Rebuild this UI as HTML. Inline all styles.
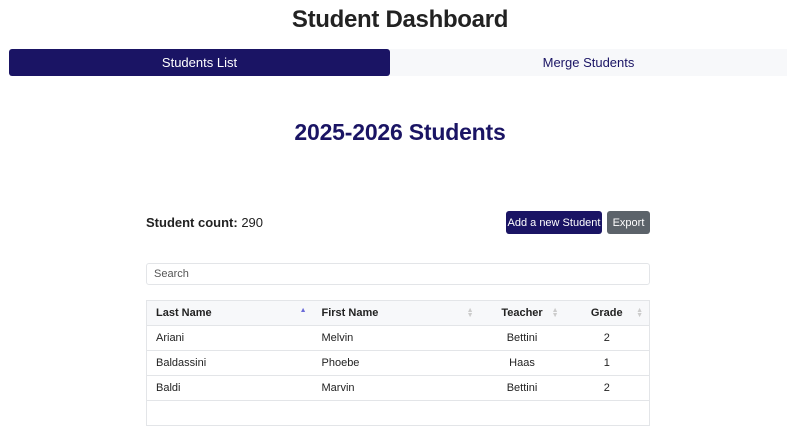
<!DOCTYPE html>
<html><head><style>
*{box-sizing:border-box;margin:0;padding:0}
body{width:800px;height:400px;overflow:hidden;background:#fff;font-family:"Liberation Sans",sans-serif;color:#222}
h1{position:absolute;top:4px;left:0;width:800px;text-align:center;font-size:24px;font-weight:bold;color:#222;line-height:32px;letter-spacing:-0.3px}
.tab{position:absolute;top:49px;height:27px;line-height:27px;text-align:center;font-size:13px}
.t1{left:9px;width:381px;background:#1a1464;color:#fff;border-radius:3px}
.t2{left:390px;width:397px;background:#f7f8fa;color:#1a1464}
h2{position:absolute;top:119px;left:0;width:800px;text-align:center;font-size:23px;font-weight:bold;color:#1a1464;letter-spacing:-0.2px}
.cnt{position:absolute;left:146px;top:215px;font-size:13px}
.btn{position:absolute;top:211px;height:23px;font-size:11px;color:#fff;border-radius:3px;white-space:nowrap;display:flex;align-items:center;justify-content:center}
.add{left:506px;width:96px;background:#1a1464}
.exp{left:607px;width:43px;background:#5c636a}
.search{position:absolute;left:146px;top:263px;width:504px;height:22px;border:1px solid #e3e5e8;border-radius:3px;font-size:11px;color:#555;padding-left:7px;line-height:20px}
table{position:absolute;left:146px;top:300px;width:504px;border-collapse:collapse;font-size:11px;border:1px solid #e3e5e8}
td,th{height:25px;border-bottom:1px solid #e3e5e8;padding:0 9px;position:relative}
th{background:#f7f8fa;font-weight:bold;text-align:left}
.c{text-align:center}
.s{position:absolute;right:6px;top:7px;font-size:7px;line-height:5px;color:#ccc}
</style></head><body>
<h1>Student Dashboard</h1>
<div class="tab t1">Students List</div>
<div class="tab t2">Merge Students</div>
<h2>2025-2026 Students</h2>
<div class="cnt"><b>Student count:</b> 290</div>
<div class="btn add">Add a new Student</div>
<div class="btn exp">Export</div>
<div class="search">Search</div>
<table>
<tr><th style="width:166px">Last Name<span class="s" style="color:#6b6bd8">▲</span></th><th style="width:167px">First Name<span class="s">▲<br>▼</span></th><th class="c" style="width:85px">Teacher<span class="s">▲<br>▼</span></th><th class="c">Grade<span class="s">▲<br>▼</span></th></tr>
<tr><td>Ariani</td><td>Melvin</td><td class="c">Bettini</td><td class="c">2</td></tr>
<tr><td>Baldassini</td><td>Phoebe</td><td class="c">Haas</td><td class="c">1</td></tr>
<tr><td>Baldi</td><td>Marvin</td><td class="c">Bettini</td><td class="c">2</td></tr>
<tr><td>&nbsp;</td><td></td><td></td><td></td></tr>
</table>
</body></html>
